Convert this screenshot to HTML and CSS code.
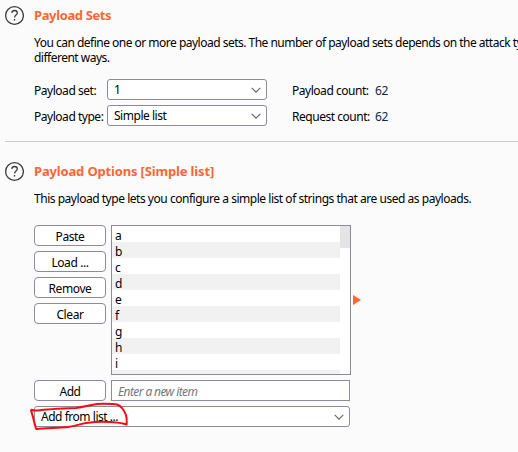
FILE: index.html
```html
<!DOCTYPE html>
<html lang="en">
<head>
<meta charset="utf-8">
<title>Payloads</title>
<link rel="stylesheet" href="styles.css">
</head>
<body>
<section class="panel sets">
  <svg class="help" width="20" height="21" viewBox="0 0 20 21"><circle cx="10.500" cy="10.500" r="8.900"/><path d="M7.800 7.800C8 6.200 9 5.500 10.600 5.500s2.700.9 2.700 2.400c0 2.100-2.700 2.200-2.700 4.500"/><path d="M10.500 14v1.600"/></svg>
  <div class="content">
    <h2 class="title">Payload Sets</h2>
    <p class="desc desc1">You can define one or more payload sets. The number of payload sets depends on the attack ty<br>different ways.</p>
    <div class="grid">
      <span class="label">Payload set:</span>
      <div class="select"><span>1</span><svg class="chev" width="10" height="6" viewBox="0 0 10 6"><path d="M.7.8L5 5.100 9.300.8"/></svg></div>
      <span class="label count">Payload count:</span><span class="value">62</span>
      <span class="label">Payload type:</span>
      <div class="select"><span>Simple list</span><svg class="chev" width="10" height="6" viewBox="0 0 10 6"><path d="M.7.8L5 5.100 9.300.8"/></svg></div>
      <span class="label count">Request count:</span><span class="value">62</span>
    </div>
  </div>
</section>
<hr>
<section class="panel options">
  <svg class="help" width="20" height="21" viewBox="0 0 20 21"><circle cx="10.500" cy="10.500" r="8.900"/><path d="M7.800 7.800C8 6.200 9 5.500 10.600 5.500s2.700.9 2.700 2.400c0 2.100-2.700 2.200-2.700 4.500"/><path d="M10.500 14v1.600"/></svg>
  <div class="content">
    <h2 class="title title2">Payload Options [Simple list]</h2>
    <p class="desc desc2">This payload type lets you configure a simple list of strings that are used as payloads.</p>
    <div class="editor">
      <div class="buttons">
        <button>Paste</button><button>Load ...</button><button>Remove</button><button>Clear</button>
      </div>
      <div class="list">
        <ul><li>a</li><li>b</li><li>c</li><li>d</li><li>e</li><li>f</li><li>g</li><li>h</li><li>i</li><li></li></ul>
        <div class="track"><div class="thumb"></div></div>
      </div>
      <svg class="arrow" width="8" height="10" viewBox="0 0 8 10"><path d="M0 0l8 5-8 5z"/></svg>
    </div>
    <div class="addrow"><button>Add</button><div class="field">Enter a new item</div></div>
    <div class="select wide"><span>Add from list ...</span><svg class="chev" width="10" height="6" viewBox="0 0 10 6"><path d="M.7.8L5 5.100 9.300.8"/></svg>
      <svg class="mark" width="100" height="30" viewBox="0 0 100 30"><path d="M.8 7.700C2 7.500 4 9 7 8.500 18 7 32 6.500 46 6 54 5 60 3 67 2 76 1 80 2 87 2.500 92 4 94 8 96 13c1 3 .8 6 .7 9.500C91 20.500 86 20.500 80 20 72 19.500 64 20 56 21 50 22 46 24 38 25 28 26 15 26 6.200 27 4.500 22 3 14 .8 7.700"/></svg>
    </div>
  </div>
</section>
</body>
</html>
```
FILE: styles.css
```css
* { box-sizing: border-box; }
body { margin: 0; width: 518px; height: 452px; overflow: hidden; background: #fbfbfb; color: #000; font: 12px/15px "Noto Sans", "Open Sans", sans-serif; letter-spacing: -.47px; }
.panel { display: flex; padding-left: 4px; }
.sets { height: 141px; padding-top: 5px; }
.options { padding-top: 19px; }
.help { flex: none; margin-right: 10px; fill: none; stroke: #3c3c3c; stroke-width: 1.3; }
.content { flex: none; width: 484px; }
.title { margin: 0; height: 20px; font-size: 13px; line-height: 20px; font-weight: 700; color: #ff6633; white-space: nowrap; letter-spacing: -.38px; }
.title2 { letter-spacing: -.16px; }
.desc { margin: 10px 0 14px; white-space: nowrap; overflow: hidden; }
.desc1 { letter-spacing: -.51px; }
.desc2 { margin: 10px 0 19px; }
.grid { display: grid; grid-template-columns: 73px 160px 83px 60px; grid-template-rows: 21px 21px; row-gap: 5px; align-items: center; }
.label, .value { white-space: nowrap; padding-top: 1px; }
.count { padding-left: 25px; }
.value { padding-left: 25px; color: #0f2747; }
.select { position: relative; display: flex; align-items: center; justify-content: space-between; height: 21px; padding: 0 5px 0 6px; border: 1px solid #8d8a9e; border-radius: 3px; background: #fff; white-space: nowrap; }
.chev { flex: none; fill: none; stroke: #666; stroke-width: 1.1; }
hr { width: 513px; height: 1px; margin: 0 0 0 5px; border: 0; background: #ccc; }
.editor { display: flex; height: 150px; }
.buttons { display: flex; flex-direction: column; gap: 5px; margin-right: 5px; }
button { width: 72px; height: 21px; padding: 1px 0 0; border: 1px solid #8d8a9e; border-radius: 4px; background: #fff; color: #000; font: inherit; letter-spacing: -.4px; }
.list { display: flex; width: 240px; height: 150px; border: 1px solid #8d8a9e; background: #fff; overflow: hidden; }
ul { flex: 1; margin: 0; padding: 0; list-style: none; }
li { height: 16px; padding: 2px 0 0 3px; line-height: 15px; }
li:nth-child(even) { background: #f1f1f1; }
.track { width: 10px; }
.thumb { height: 22px; background: #e4e4e4; }
.arrow { align-self: center; margin-left: 2px; fill: #ff6633; }
.addrow { display: flex; gap: 5px; margin: 5px 0; }
.field { width: 239px; height: 21px; padding: 1px 0 0 6px; border: 1px solid #8d8a9e; background: #fff; color: #777; font-style: italic; line-height: 19px; letter-spacing: -.6px; }
.wide { width: 316px; }
.mark { position: absolute; left: -5px; top: -5px; overflow: visible; fill: none; stroke: #fa0a10; stroke-width: 2; stroke-linejoin: round; }
```
